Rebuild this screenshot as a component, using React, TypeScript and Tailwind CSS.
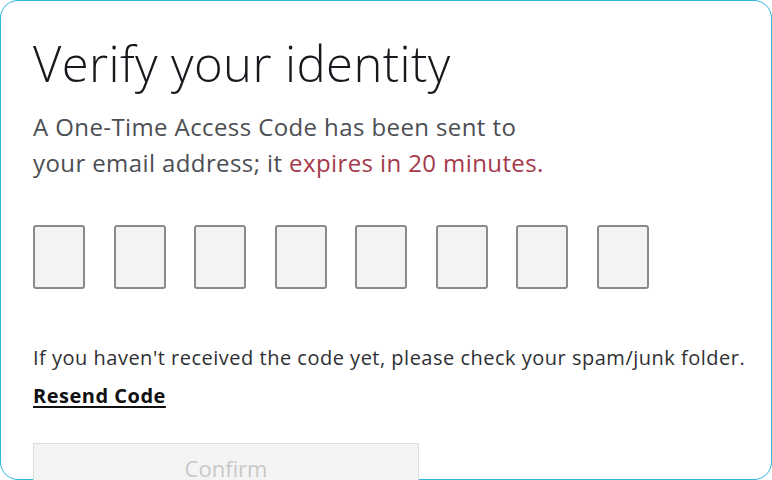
import React from 'react';

const font = { fontFamily: '"Open Sans", "Noto Sans", sans-serif' };

export default function App() {
  const boxes = Array.from({ length: 8 });

  return (
    <div className="h-[480px] w-[772px] overflow-hidden bg-white" style={font}>
      <div className="h-[480px] w-[772px] rounded-[18px] border border-[#2bb5e0] bg-white pl-[32px] pt-[32px]">
        {/* heading */}
        <h1 className="text-[49px] leading-[60px] font-light tracking-[0.4px] text-[#16181d]">
          Verify your identity
        </h1>

        <p className="mt-[16px] text-[24px] leading-[36px] tracking-[0.4px] text-[#4c4e54]">
          A One-Time Access Code has been sent to
          <br />
          your email address; it <span className="text-[#a5394a]">expires in 20 minutes.</span>
        </p>

        {/* code inputs */}
        <div className="mt-[44px] flex gap-[28.5px]">
          {boxes.map((_, i) => (
            <input
              key={i}
              maxLength={1}
              className="h-[64px] w-[52px] rounded-[3px] border-2 border-[#8a8a8a] bg-[#f3f3f5] text-center text-2xl outline-none"
            />
          ))}
        </div>

        <p className="mt-[55px] text-[20px] leading-[28px] tracking-[0.5px] text-[#2f3033]">
          If you haven't received the code yet, please check your spam/junk folder.
        </p>
        <button className="mt-[10px] text-[20px] leading-[28px] font-bold tracking-[0.5px] text-[#111] underline underline-offset-[3px]">
          Resend Code
        </button>

        <div className="mt-[33px]">
          <button
            disabled
            className="h-[50px] w-[386px] border border-[#dcdcdc] bg-[#f4f4f4] text-[22px] text-[#c8c8c8]"
          >
            Confirm
          </button>
        </div>
      </div>
    </div>
  );
}
